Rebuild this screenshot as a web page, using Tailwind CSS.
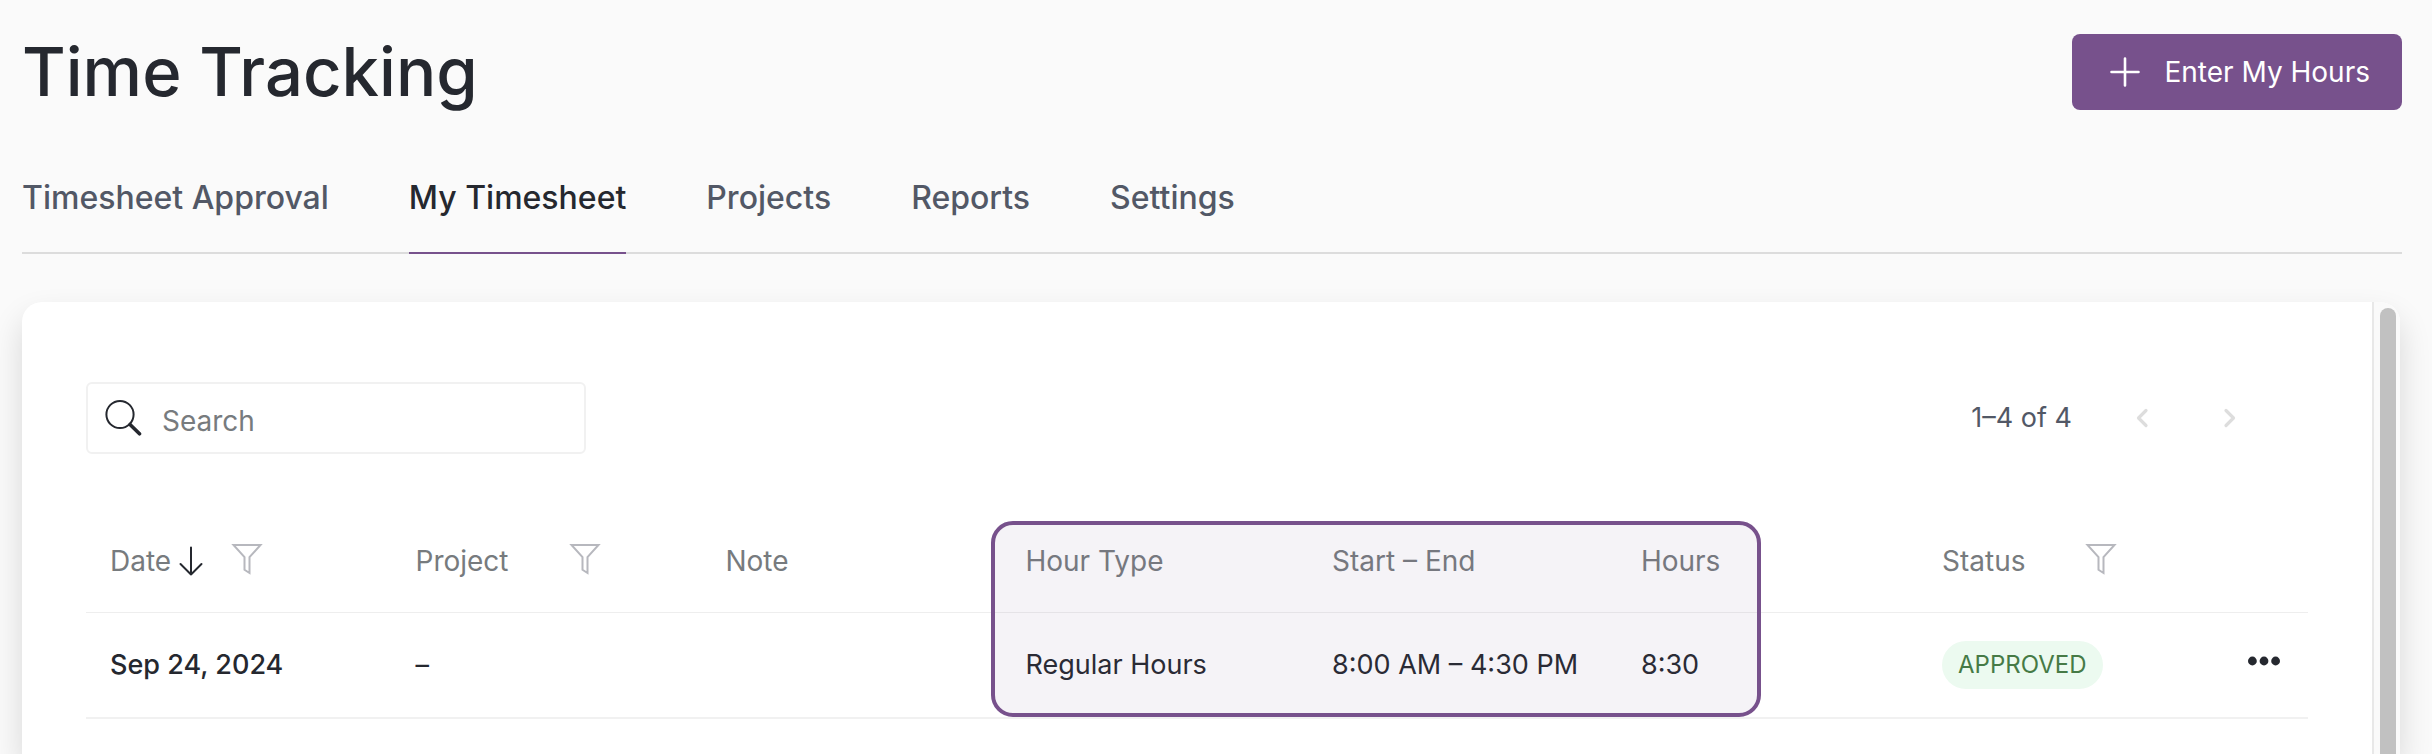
<!DOCTYPE html>
<html lang="en">
<head>
    <meta charset="UTF-8">
    <meta name="viewport" content="width=device-width, initial-scale=1.0">
    <title>Time Tracking</title>
    <script src="https://cdn.jsdelivr.net/npm/@tailwindcss/browser@4"></script>
    <style>
        body { font-family: Inter, 'Liberation Sans', sans-serif; }
    </style>
</head>
<body class="bg-[#fafafa] text-[#25282f]">
    <div class="flex h-screen flex-col overflow-hidden pt-8 pr-[30px] pl-[22px]">
        <!-- Header -->
        <header class="flex items-center justify-between">
            <h1 class="text-[67px] leading-20 font-medium">Time Tracking</h1>
            <button type="button" class="flex h-19 items-center gap-6 rounded-lg bg-[#77518c] pr-8 pl-[38px] text-[28px] text-white">
                <svg class="size-[30px]" viewBox="0 0 30 30" fill="none" stroke="currentColor" stroke-width="2.6" stroke-linecap="round" aria-hidden="true">
                    <path d="M15 1.5v27M1.5 15h27"/>
                </svg>
                Enter My Hours
            </button>
        </header>

        <!-- Tabs -->
        <nav class="mt-12 flex gap-20 border-b-2 border-[#dcdcdc] text-[32px] leading-10 font-medium text-[#525866]">
            <a href="#" class="-mb-0.5 border-b-2 border-transparent pt-[18px] pb-[34px]">Timesheet Approval</a>
            <a href="#" aria-current="page" class="-mb-0.5 border-b-2 border-[#77518c] pt-[18px] pb-[34px] text-[#25282f]">My Timesheet</a>
            <a href="#" class="-mb-0.5 border-b-2 border-transparent pt-[18px] pb-[34px]">Projects</a>
            <a href="#" class="-mb-0.5 border-b-2 border-transparent pt-[18px] pb-[34px]">Reports</a>
            <a href="#" class="-mb-0.5 border-b-2 border-transparent pt-[18px] pb-[34px]">Settings</a>
        </nav>

        <!-- Timesheet card -->
        <main class="mt-12 mr-0.5 flex flex-1 overflow-hidden rounded-t-[20px] bg-white shadow-[0_16px_32px_rgba(0,0,0,0.14)]">
            <div class="flex-1 px-16 pt-20">
                <div class="flex items-center justify-between">
                    <label class="flex h-18 w-[500px] items-center gap-5 rounded-md border-2 border-[#f1f1f1] px-4">
                        <svg class="size-[38px]" viewBox="0 0 38 38" fill="none" stroke="#25282f" stroke-linecap="round" aria-hidden="true">
                            <circle cx="16" cy="15.5" r="13.6" stroke-width="2"/>
                            <path d="M26 25.5 35.5 34.8" stroke-width="3.6"/>
                        </svg>
                        <input type="search" placeholder="Search" aria-label="Search" class="min-w-0 flex-1 pt-1.5 text-[28px] outline-none placeholder:text-[#777b7e]">
                    </label>
                    <div class="flex items-center pr-14 text-[27px] text-[#525866]">
                        <span>1–4 of 4</span>
                        <button type="button" aria-label="Previous page" class="ml-12 flex size-11 items-center justify-center text-[#dddddd]">
                            <svg class="size-5" viewBox="0 0 20 20" fill="none" stroke="currentColor" stroke-width="3.2" stroke-linecap="round" stroke-linejoin="round"><path d="M14 2.5 6.5 10l7.5 7.5"/></svg>
                        </button>
                        <button type="button" aria-label="Next page" class="ml-11 flex size-11 items-center justify-center text-[#dddddd]">
                            <svg class="size-5" viewBox="0 0 20 20" fill="none" stroke="currentColor" stroke-width="3.2" stroke-linecap="round" stroke-linejoin="round"><path d="M6 2.5 13.5 10 6 17.5"/></svg>
                        </button>
                    </div>
                </div>

                <div class="relative mt-13">
                    <table class="w-full table-fixed text-left text-[27px] whitespace-nowrap">
                        <colgroup>
                            <col class="w-[13.75%]">
                            <col class="w-[13.95%]">
                            <col class="w-[13.5%]">
                            <col class="w-[13.8%]">
                            <col class="w-[13.9%]">
                            <col class="w-[13.55%]">
                            <col class="w-[13.75%]">
                            <col>
                        </colgroup>
                        <thead class="text-[28px] text-[#777b7e]">
                            <tr class="h-[106px] border-b border-[#eeeeee]">
                                <th class="pt-1 pl-6 font-normal">
                                    <div class="flex items-center">
                                        Date
                                        <svg class="ml-2 h-[30px] w-6" viewBox="0 0 24 30" fill="none" stroke="#25282f" stroke-width="2" stroke-linecap="round" stroke-linejoin="round" aria-hidden="true"><path d="M12 1.5v27M1.5 18 12 28.5 22.5 18"/></svg>
                                        <button type="button" aria-label="Filter by date" class="ml-7 pb-1">
                                            <svg class="size-8" viewBox="0 0 32 32" fill="none" stroke="#b7b8be" stroke-width="2"><path d="M2.5 2h27L18.5 14.2V30l-5-3.2V14.2z"/></svg>
                                        </button>
                                    </div>
                                </th>
                                <th class="pt-1 pl-6 font-normal">
                                    <div class="flex items-center gap-15">
                                        Project
                                        <button type="button" aria-label="Filter by project" class="pb-1">
                                            <svg class="size-8" viewBox="0 0 32 32" fill="none" stroke="#b7b8be" stroke-width="2"><path d="M2.5 2h27L18.5 14.2V30l-5-3.2V14.2z"/></svg>
                                        </button>
                                    </div>
                                </th>
                                <th class="pt-1 pl-6 font-normal">Note</th>
                                <th class="pt-1 pl-6 font-normal">Hour Type</th>
                                <th class="pt-1 pl-6 font-normal">Start – End</th>
                                <th class="pt-1 pl-6 font-normal">Hours</th>
                                <th class="pt-1 pl-6 font-normal">
                                    <div class="flex items-center gap-15">
                                        Status
                                        <button type="button" aria-label="Filter by status" class="pb-1">
                                            <svg class="size-8" viewBox="0 0 32 32" fill="none" stroke="#b7b8be" stroke-width="2"><path d="M2.5 2h27L18.5 14.2V30l-5-3.2V14.2z"/></svg>
                                        </button>
                                    </div>
                                </th>
                                <td></td>
                            </tr>
                        </thead>
                        <tbody>
                            <tr class="h-[106px] border-b-2 border-[#f1f1f1]">
                                <td class="pl-6 font-medium">Sep 24, 2024</td>
                                <td class="pl-6">–</td>
                                <td></td>
                                <td class="pl-6">Regular Hours</td>
                                <td class="pl-6">8:00 AM – 4:30 PM</td>
                                <td class="pl-6">8:30</td>
                                <td class="pl-6">
                                    <span class="inline-flex h-12 items-center rounded-full bg-[#ecfaf0] px-4 text-[24px] text-[#467a46]">APPROVED</span>
                                </td>
                                <td class="pl-6">
                                    <button type="button" aria-label="More actions" class="flex pb-2">
                                        <svg class="h-3 w-8" viewBox="0 0 32 12" fill="#25282f"><circle cx="4.4" cy="6" r="4.4"/><circle cx="16" cy="6" r="4.4"/><circle cx="27.6" cy="6" r="4.4"/></svg>
                                    </button>
                                </td>
                            </tr>
                        </tbody>
                    </table>
                    <!-- Highlight over the hour columns -->
                    <div class="pointer-events-none absolute top-[15px] bottom-0.5 left-[40.75%] w-[34.65%] rounded-[22px] border-4 border-[#77518c] bg-[#77518c]/7"></div>
                </div>
            </div>

            <!-- Scrollbar -->
            <div class="w-7 border-l-2 border-[#e8e8e8] bg-[#fafafa] pt-1.5 pl-1.5" aria-hidden="true">
                <div class="h-screen w-4 rounded-full bg-[#c1c1c1]"></div>
            </div>
        </main>
    </div>
</body>
</html>
